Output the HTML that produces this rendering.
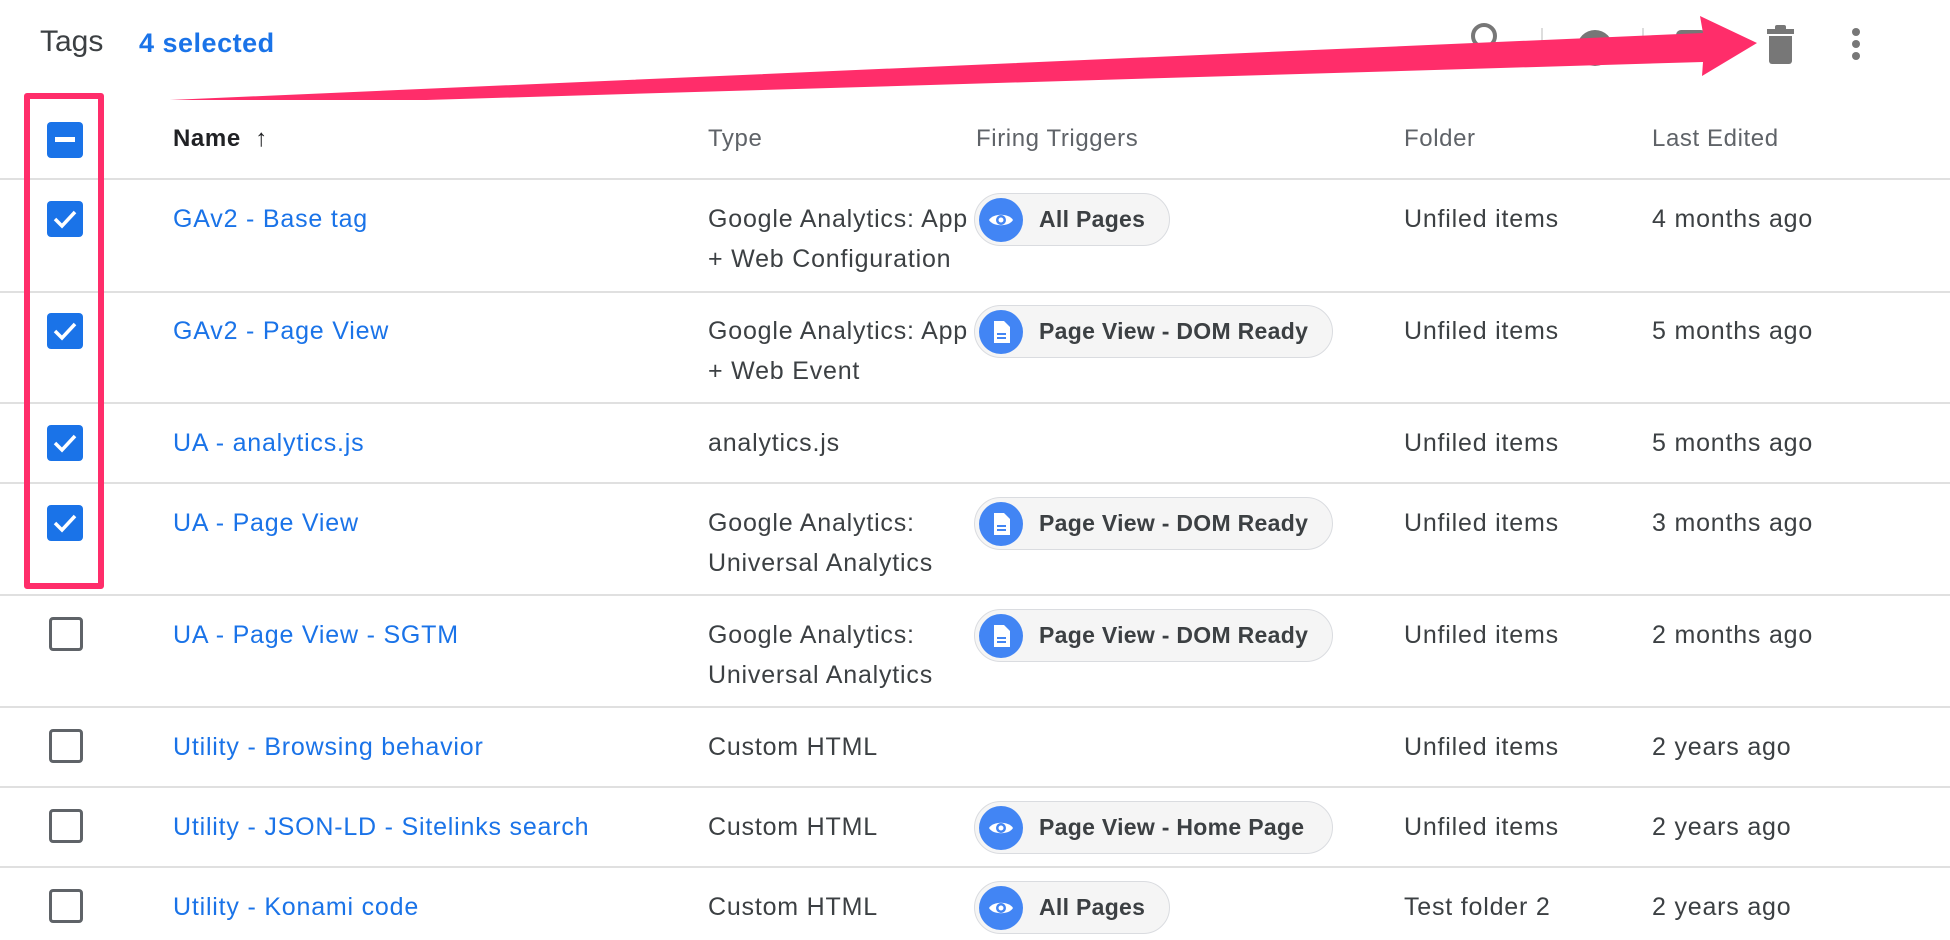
<!DOCTYPE html>
<html><head><meta charset="utf-8"><style>
body{margin:0;width:1950px;height:940px;overflow:hidden;background:#fff;font-family:"Liberation Sans",Arial,sans-serif;position:relative}
.a{position:absolute;white-space:nowrap}
.t{font-size:25px;letter-spacing:0.8px;color:#3c4043;line-height:40px}
.h{font-size:24px;letter-spacing:0.6px;color:#5f6368;line-height:30px}
.l{color:#1a73e8}
.sep{position:absolute;left:0;width:1950px;height:2px;background:#e0e0e0}
.cb{position:absolute;left:47px;width:36px;height:36px;border-radius:4px;background:#1a73e8}
.cbo{position:absolute;left:49px;width:28px;height:28px;border:3px solid #5f6368;border-radius:4px;background:#fff}
.chip{position:absolute;left:974px;height:53px;border:1px solid #dadce0;background:#f5f5f5;border-radius:28px;box-sizing:border-box}
.chip .ic{position:absolute;left:4px;top:4px;width:44px;height:44px;border-radius:50%;background:#4285f4}
.chip span{position:absolute;left:64px;top:0;line-height:51px;font-size:23px;color:#3c4043;font-weight:bold;letter-spacing:.3px}
</style></head><body>
<div class="a" style="left:40px;top:25px;font-size:30px;color:#3c4043">Tags</div>
<div class="a" style="left:139px;top:28px;font-size:27px;letter-spacing:0.5px;color:#1a73e8;font-weight:bold">4 selected</div>

<svg class="a" style="left:0;top:0" width="1950" height="100">
<circle cx="1484" cy="36" r="11" fill="none" stroke="#777" stroke-width="4"/>
<rect x="1541" y="28" width="2" height="30" fill="#ddd"/>
<circle cx="1595" cy="48" r="18" fill="#777"/>
<rect x="1642" y="28" width="2" height="30" fill="#ddd"/>
<rect x="1676" y="30" width="30" height="32" rx="5" fill="#777"/>
<rect x="1767" y="29" width="27" height="5" fill="#777"/><rect x="1775" y="25" width="11" height="6" rx="2" fill="#777"/>
<path d="M1769 36h23v25a3 3 0 0 1-3 3h-17a3 3 0 0 1-3-3z" fill="#777"/>
<circle cx="1856" cy="32" r="4" fill="#777"/><circle cx="1856" cy="44" r="4" fill="#777"/><circle cx="1856" cy="56" r="4" fill="#777"/>
<polygon points="124,102 1703,33 1700,16 1757,43 1702,76 1703,62 124,109" fill="#ff2d6a"/>
</svg>

<div class="cb" style="top:122px"><div style="position:absolute;left:8px;top:15px;width:20px;height:5px;background:#fff"></div></div>
<div class="a h" style="left:173px;top:124px;color:#202124;font-weight:bold">Name&nbsp; ↑</div>
<div class="a h" style="left:708px;top:124px">Type</div>
<div class="a h" style="left:976px;top:124px">Firing Triggers</div>
<div class="a h" style="left:1404px;top:124px">Folder</div>
<div class="a h" style="left:1652px;top:124px">Last Edited</div>
<div class="sep" style="top:178px"></div>
<div class="sep" style="top:291px"></div>
<div class="sep" style="top:402px"></div>
<div class="sep" style="top:482px"></div>
<div class="sep" style="top:594px"></div>
<div class="sep" style="top:706px"></div>
<div class="sep" style="top:786px"></div>
<div class="sep" style="top:866px"></div>

<svg width="0" height="0" style="position:absolute"><defs>
<g id="ck"><path d="M8 18l7 7 13-14" fill="none" stroke="#fff" stroke-width="3.5"/></g>
<g id="eye"><path d="M10 22c4-7 20-7 24 0c-4 7-20 7-24 0z" fill="#fff"/><circle cx="22" cy="22" r="5" fill="#4285f4"/><circle cx="22" cy="22" r="2.5" fill="#fff"/></g>
<g id="doc"><path d="M15 11h10l6 6v16h-16z" fill="#fff"/><rect x="18" y="23" width="9" height="2" fill="#4285f4"/><rect x="18" y="27" width="9" height="2" fill="#4285f4"/></g>
</defs></svg>

<div class="cb" style="top:201px"><svg width="36" height="36"><use href="#ck"/></svg></div>
<div class="cb" style="top:313px"><svg width="36" height="36"><use href="#ck"/></svg></div>
<div class="cb" style="top:425px"><svg width="36" height="36"><use href="#ck"/></svg></div>
<div class="cb" style="top:505px"><svg width="36" height="36"><use href="#ck"/></svg></div>
<div class="cbo" style="top:617px"></div>
<div class="cbo" style="top:729px"></div>
<div class="cbo" style="top:809px"></div>
<div class="cbo" style="top:889px"></div>

<div class="a t l" style="left:173px;top:199px">GAv2 - Base tag</div>
<div class="a t" style="left:708px;top:199px">Google Analytics: App<br>+ Web Configuration</div>
<div class="chip" style="top:193px;width:196px"><div class="ic"><svg width="44" height="44"><use href="#eye"/></svg></div><span>All Pages</span></div>
<div class="a t" style="left:1404px;top:199px">Unfiled items</div>
<div class="a t" style="left:1652px;top:199px">4 months ago</div>

<div class="a t l" style="left:173px;top:311px">GAv2 - Page View</div>
<div class="a t" style="left:708px;top:311px">Google Analytics: App<br>+ Web Event</div>
<div class="chip" style="top:305px;width:359px"><div class="ic"><svg width="44" height="44"><use href="#doc"/></svg></div><span>Page View - DOM Ready</span></div>
<div class="a t" style="left:1404px;top:311px">Unfiled items</div>
<div class="a t" style="left:1652px;top:311px">5 months ago</div>

<div class="a t l" style="left:173px;top:423px">UA - analytics.js</div>
<div class="a t" style="left:708px;top:423px">analytics.js</div>
<div class="a t" style="left:1404px;top:423px">Unfiled items</div>
<div class="a t" style="left:1652px;top:423px">5 months ago</div>

<div class="a t l" style="left:173px;top:503px">UA - Page View</div>
<div class="a t" style="left:708px;top:503px">Google Analytics:<br>Universal Analytics</div>
<div class="chip" style="top:497px;width:359px"><div class="ic"><svg width="44" height="44"><use href="#doc"/></svg></div><span>Page View - DOM Ready</span></div>
<div class="a t" style="left:1404px;top:503px">Unfiled items</div>
<div class="a t" style="left:1652px;top:503px">3 months ago</div>

<div class="a t l" style="left:173px;top:615px">UA - Page View - SGTM</div>
<div class="a t" style="left:708px;top:615px">Google Analytics:<br>Universal Analytics</div>
<div class="chip" style="top:609px;width:359px"><div class="ic"><svg width="44" height="44"><use href="#doc"/></svg></div><span>Page View - DOM Ready</span></div>
<div class="a t" style="left:1404px;top:615px">Unfiled items</div>
<div class="a t" style="left:1652px;top:615px">2 months ago</div>

<div class="a t l" style="left:173px;top:727px">Utility - Browsing behavior</div>
<div class="a t" style="left:708px;top:727px">Custom HTML</div>
<div class="a t" style="left:1404px;top:727px">Unfiled items</div>
<div class="a t" style="left:1652px;top:727px">2 years ago</div>

<div class="a t l" style="left:173px;top:807px">Utility - JSON-LD - Sitelinks search</div>
<div class="a t" style="left:708px;top:807px">Custom HTML</div>
<div class="chip" style="top:801px;width:359px"><div class="ic"><svg width="44" height="44"><use href="#eye"/></svg></div><span>Page View - Home Page</span></div>
<div class="a t" style="left:1404px;top:807px">Unfiled items</div>
<div class="a t" style="left:1652px;top:807px">2 years ago</div>

<div class="a t l" style="left:173px;top:887px">Utility - Konami code</div>
<div class="a t" style="left:708px;top:887px">Custom HTML</div>
<div class="chip" style="top:881px;width:196px"><div class="ic"><svg width="44" height="44"><use href="#eye"/></svg></div><span>All Pages</span></div>
<div class="a t" style="left:1404px;top:887px">Test folder 2</div>
<div class="a t" style="left:1652px;top:887px">2 years ago</div>

<div style="position:absolute;left:24px;top:93px;width:68px;height:484px;border:6px solid #ff2d6a;border-radius:3px"></div>
</body></html>
